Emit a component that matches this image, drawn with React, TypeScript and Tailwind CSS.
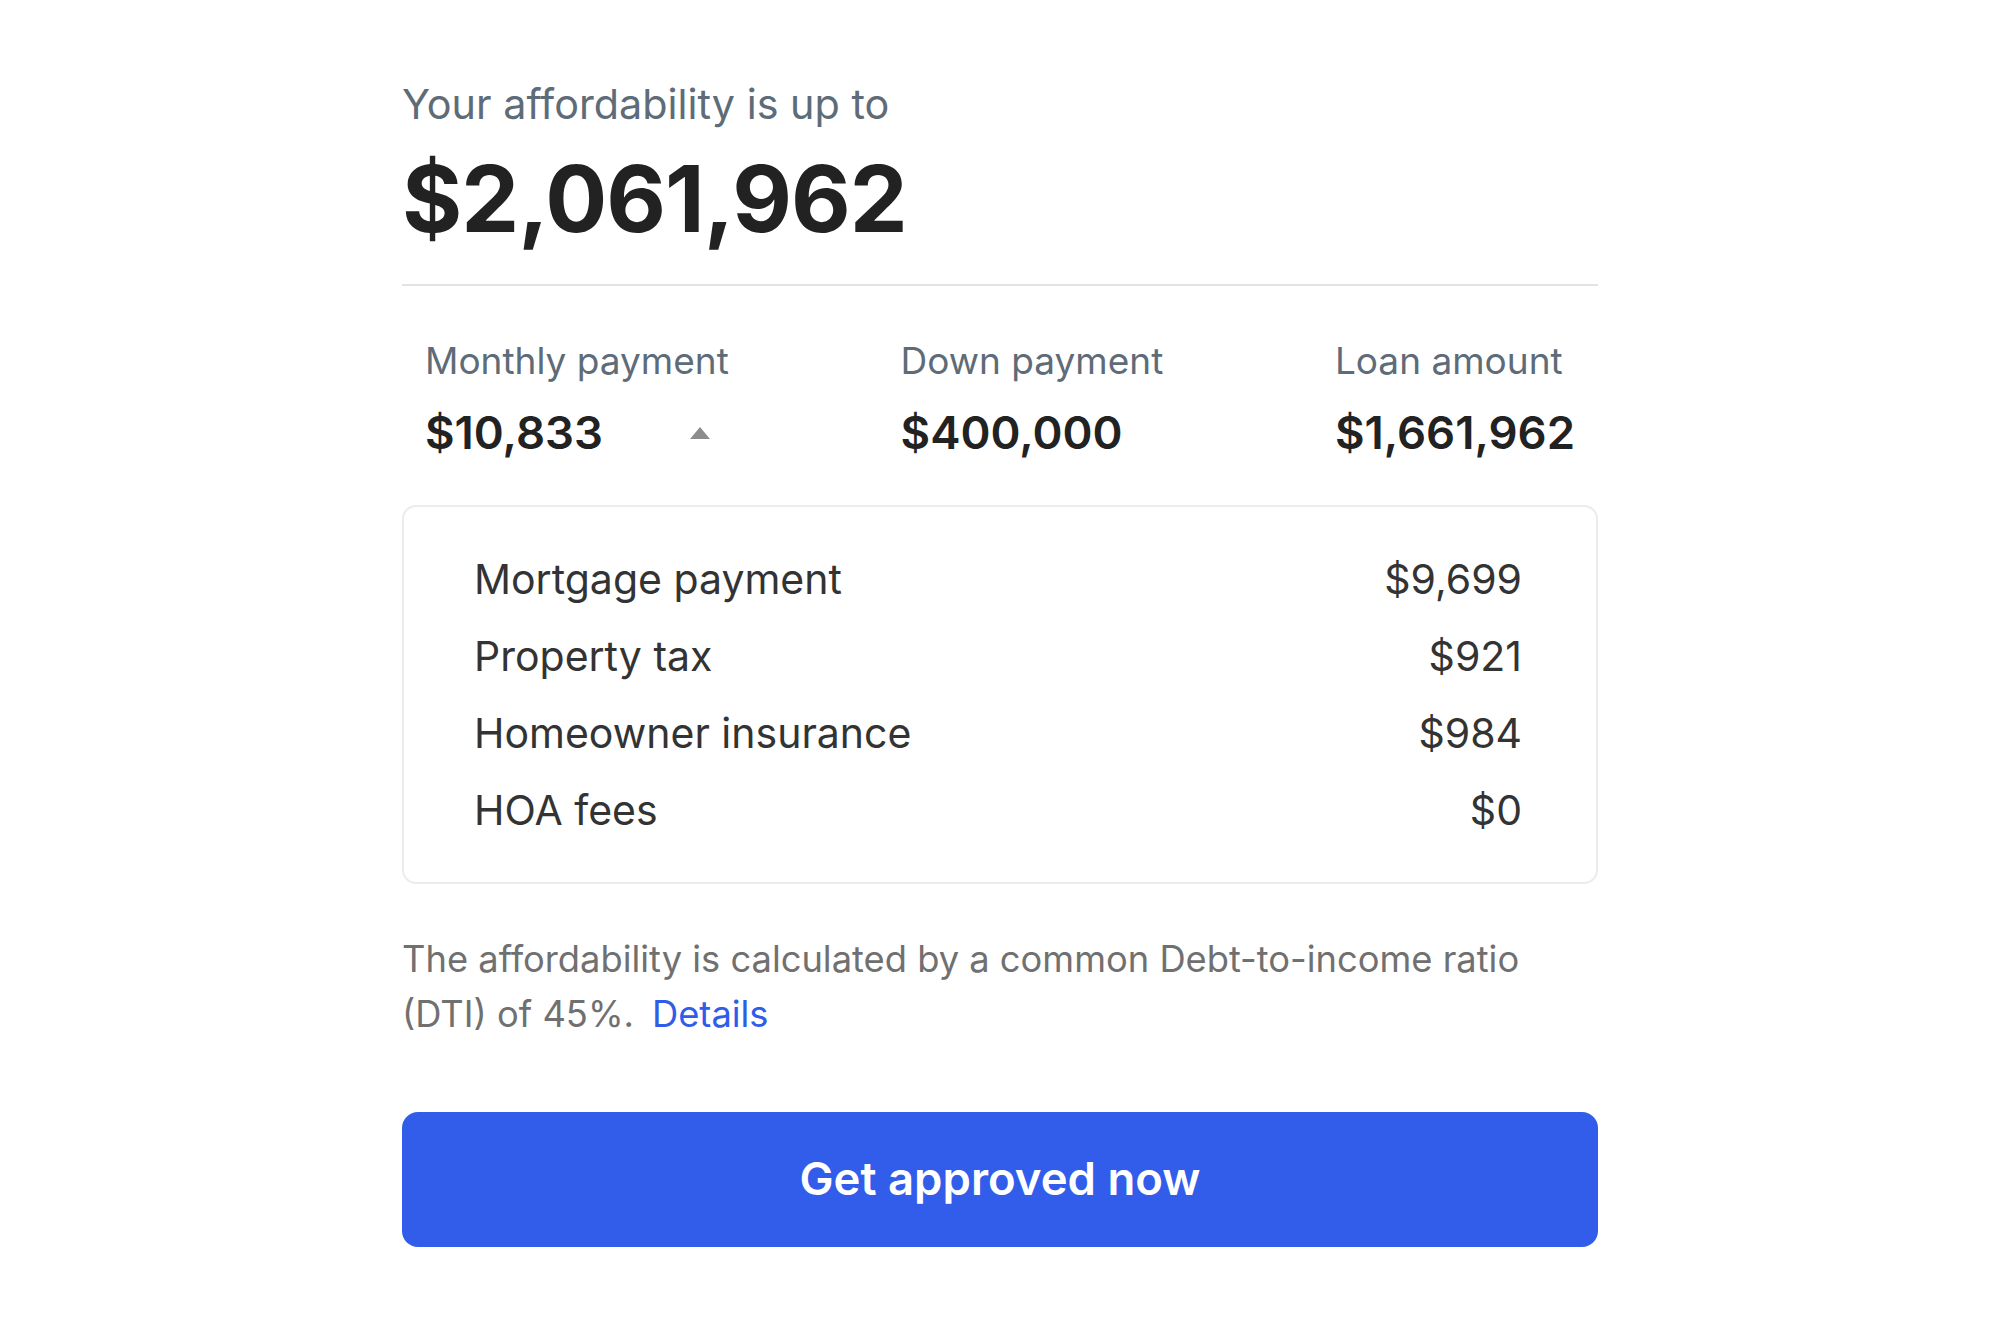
import React from 'react';

const stats = [
  { label: 'Monthly payment', value: '$10,833', toggle: true },
  { label: 'Down payment', value: '$400,000' },
  { label: 'Loan amount', value: '$1,661,962' },
];

const breakdown = [
  { label: 'Mortgage payment', value: '$9,699' },
  { label: 'Property tax', value: '$921' },
  { label: 'Homeowner insurance', value: '$984' },
  { label: 'HOA fees', value: '$0' },
];

const App: React.FC = () => {
  return (
    <div className="min-h-screen bg-white" style={{ fontFamily: 'Inter, "Noto Sans", sans-serif' }}>
      <div className="mx-auto w-[1196px] pt-[78px]">
        <div className="text-[41.3px] leading-[52px] text-[#5e6b78]">Your affordability is up to</div>
        <div className="mt-[14px] text-[92px] leading-[110px] font-bold tracking-[-1px] text-[#222222]">$2,061,962</div>

        <div className="mt-[30px] border-t-2 border-[#e3e3e3]" />

        <div className="flex justify-between px-[23px] pt-[53px]">
          {stats.map(s => (
            <div key={s.label} className={s.toggle ? 'w-[304px] shrink-0' : 'shrink-0'}>
              <div className="whitespace-nowrap text-[37px] leading-[44px] text-[#5e6b78]">{s.label}</div>
              <div className="mt-[22px] flex items-center">
                <span className="whitespace-nowrap text-[45.5px] leading-[56px] font-semibold text-[#222222]">{s.value}</span>
                {s.toggle && (
                  <svg className="ml-[86px]" width="22" height="14" viewBox="0 0 22 14">
                    <path d="M11 1 L21 13 L1 13 Z" fill="#8c8c8c" />
                  </svg>
                )}
              </div>
            </div>
          ))}
        </div>

        <div className="mt-[44px] rounded-[14px] border-2 border-[#ececec] pl-[70px] pr-[74px] py-[48px]">
          {breakdown.map((r, i) => (
            <div key={r.label} className={`flex justify-between text-[41px] leading-[48px] text-[#333333] ${i > 0 ? 'mt-[29px]' : ''}`}>
              <span>{r.label}</span>
              <span>{r.value}</span>
            </div>
          ))}
        </div>

        <p className="mt-[48px] text-[36.3px] leading-[55px] text-[#707070]">
          The affordability is calculated by a common Debt-to-income ratio (DTI) of 45%.
          <a className="ml-[18px] text-[#2f5ce8]">Details</a>
        </p>

        <button className="mt-[70px] flex h-[135px] w-full items-center justify-center rounded-[16px] bg-[#315dea] text-[45.5px] font-semibold text-white">
          Get approved now
        </button>
      </div>
    </div>
  );
};

export default App;
